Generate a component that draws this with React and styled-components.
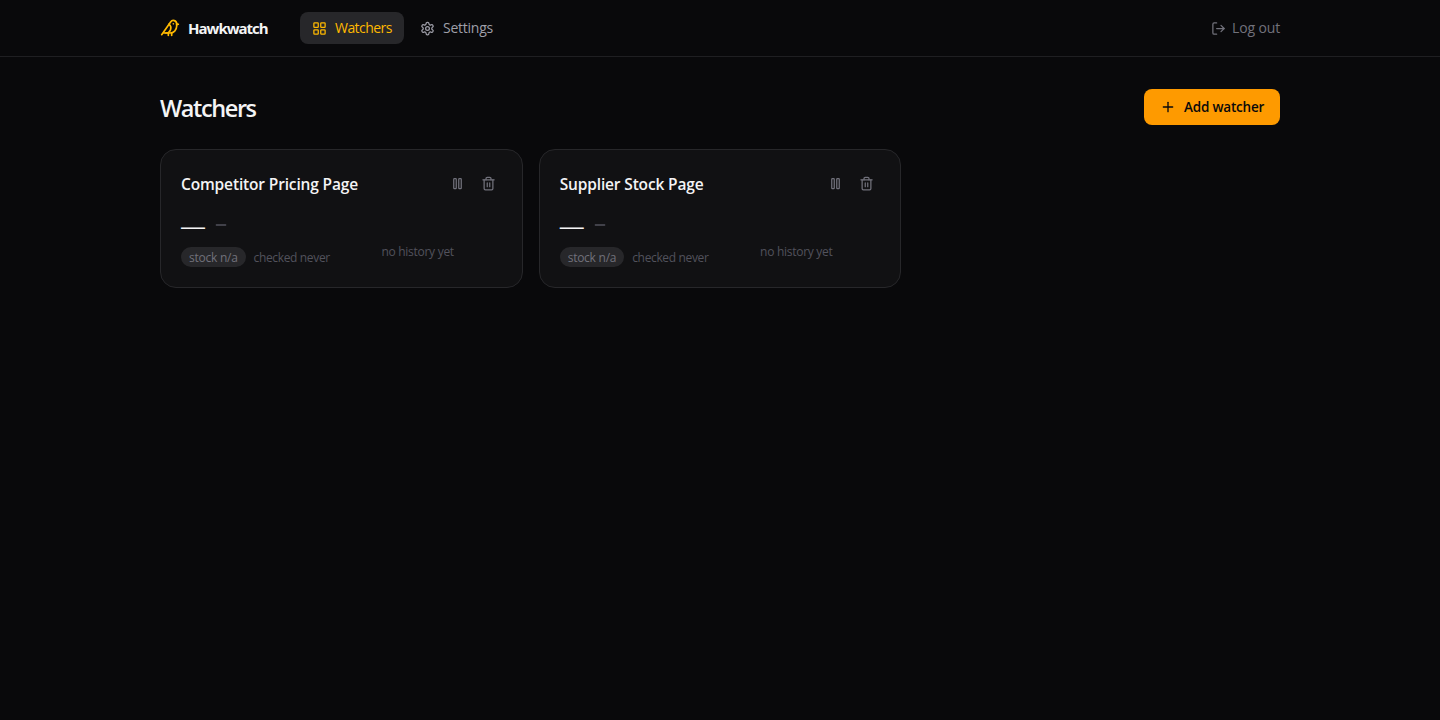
import React from "react";
import styled, { createGlobalStyle } from "styled-components";
import { Bird, LayoutGrid, LogOut, Minus, Plus } from "lucide-react";

const GlobalStyle = createGlobalStyle`
  *, *::before, *::after {
    box-sizing: border-box;
  }
  body {
    margin: 0;
    background-color: #09090b;
    color: #f4f4f5;
    font-family: "Open Sans", "Noto Sans", sans-serif;
    font-size: 14px;
    line-height: 20px;
  }
  svg {
    display: block;
    flex-shrink: 0;
  }
  h1, h2 {
    margin: 0;
  }
  button {
    font: inherit;
    border: 0;
    cursor: pointer;
  }
`;

const Page = styled.div`
  min-height: 100vh;
`;

const Header = styled.header`
  border-bottom: 1px solid #1f1f22;
`;

const HeaderInner = styled.div`
  width: 1120px;
  height: 56px;
  margin: 0 auto;
  display: flex;
  align-items: center;
`;

const Brand = styled.div`
  width: 108px;
  margin-right: 32px;
  display: flex;
  align-items: center;
  gap: 8px;
  font-size: 15px;
  font-weight: 700;
  letter-spacing: -1px;
  white-space: nowrap;

  svg {
    color: #ffb900;
  }
`;

const Nav = styled.nav`
  display: flex;
  gap: 4px;
`;

const NavLink = styled.a`
  width: ${(props) => props.$width};
  height: 32px;
  padding: 0 12px;
  display: flex;
  align-items: center;
  gap: 8px;
  border-radius: 8px;
  letter-spacing: ${(props) => props.$tracking};
  white-space: nowrap;
  color: ${(props) => (props.$active ? "#ffb900" : "#9f9fa9")};
  background-color: ${(props) => (props.$active ? "#27272a" : "transparent")};
`;

const LogoutButton = styled.button`
  margin-left: auto;
  padding: 0;
  display: flex;
  align-items: center;
  gap: 6px;
  background: none;
  color: #71717b;
  letter-spacing: -0.15px;
`;

const Main = styled.main`
  width: 1120px;
  margin: 0 auto;
  padding-top: 32px;
`;

const TitleRow = styled.div`
  height: 36px;
  margin-bottom: 24px;
  display: flex;
  align-items: center;
  justify-content: space-between;
`;

const Title = styled.h1`
  padding-top: 2px;
  font-size: 23.5px;
  line-height: 32px;
  font-weight: 600;
  letter-spacing: -1.4px;
`;

const AddButton = styled.button`
  width: 136px;
  height: 36px;
  padding: 0 16px;
  display: flex;
  align-items: center;
  gap: 8px;
  border-radius: 8px;
  background-color: #fe9a00;
  color: #09090b;
  font-size: 13.5px;
  font-weight: 600;
  letter-spacing: -0.2px;
  white-space: nowrap;
`;

const Grid = styled.div`
  display: grid;
  grid-template-columns: repeat(3, 1fr);
  gap: 16px;
`;

const Card = styled.article`
  height: 139px;
  padding: 20px;
  border: 1px solid #27272a;
  border-radius: 16px;
  background-color: #111113;
`;

const CardHeader = styled.div`
  height: 27px;
  margin-bottom: 12px;
  display: flex;
  align-items: center;
  justify-content: space-between;
`;

const CardTitle = styled.h2`
  font-size: 15.5px;
  line-height: 24px;
  font-weight: 600;
  letter-spacing: -0.15px;
  white-space: nowrap;
`;

const Actions = styled.div`
  display: flex;
  gap: 4px;
`;

const IconButton = styled.button`
  padding: 6px;
  background: none;
  color: #71717b;
`;

const CardBody = styled.div`
  height: 58px;
  display: flex;
  justify-content: space-between;
`;

const PriceRow = styled.div`
  height: 32px;
  margin-bottom: 6px;
  display: flex;
  align-items: center;
  gap: 8px;

  svg {
    color: #52525c;
  }
`;

const Price = styled.span`
  padding-top: 2px;
  font-family: "Liberation Sans", sans-serif;
  font-size: 24px;
  line-height: 32px;
  font-weight: 400;
`;

const MetaRow = styled.div`
  height: 20px;
  display: flex;
  gap: 8px;
  font-size: 12px;
  line-height: 22px;
  letter-spacing: -0.25px;
  white-space: nowrap;
`;

const StockBadge = styled.span`
  height: 20px;
  padding: 0 8px;
  border-radius: 10px;
  background-color: #27272a;
  color: #71717b;
`;

const Checked = styled.span`
  letter-spacing: -0.35px;
  color: #52525c;
`;

const History = styled.div`
  width: 168px;
  height: 48px;
  margin-top: 19px;
  line-height: 48px;
  text-align: center;
  color: #52525c;
  font-size: 12px;
  letter-spacing: -0.28px;
`;

const Icon = ({ children }) => (
  <svg
    width="15"
    height="15"
    viewBox="0 0 24 24"
    fill="none"
    stroke="currentColor"
    strokeWidth="2"
    strokeLinecap="round"
    strokeLinejoin="round"
  >
    {children}
  </svg>
);

const PauseIcon = () => (
  <Icon>
    <rect x="14" y="4" width="4" height="16" rx="1" />
    <rect x="6" y="4" width="4" height="16" rx="1" />
  </Icon>
);

const TrashIcon = () => (
  <Icon>
    <path d="M3 6h18" />
    <path d="M19 6v14c0 1-1 2-2 2H7c-1 0-2-1-2-2V6" />
    <path d="M8 6V4c0-1 1-2 2-2h4c1 0 2 1 2 2v2" />
    <path d="M10 11v6" />
    <path d="M14 11v6" />
  </Icon>
);

const SettingsIcon = () => (
  <Icon>
    <path d="M12.22 2h-.44a2 2 0 0 0-2 2v.18a2 2 0 0 1-1 1.73l-.43.25a2 2 0 0 1-2 0l-.15-.08a2 2 0 0 0-2.73.73l-.22.38a2 2 0 0 0 .73 2.73l.15.1a2 2 0 0 1 1 1.72v.51a2 2 0 0 1-1 1.74l-.15.09a2 2 0 0 0-.73 2.73l.22.38a2 2 0 0 0 2.73.73l.15-.08a2 2 0 0 1 2 0l.43.25a2 2 0 0 1 1 1.73V20a2 2 0 0 0 2 2h.44a2 2 0 0 0 2-2v-.18a2 2 0 0 1 1-1.73l.43-.25a2 2 0 0 1 2 0l.15.08a2 2 0 0 0 2.73-.73l.22-.39a2 2 0 0 0-.73-2.73l-.15-.08a2 2 0 0 1-1-1.74v-.5a2 2 0 0 1 1-1.74l.15-.09a2 2 0 0 0 .73-2.73l-.22-.38a2 2 0 0 0-2.73-.73l-.15.08a2 2 0 0 1-2 0l-.43-.25a2 2 0 0 1-1-1.73V4a2 2 0 0 0-2-2z" />
    <circle cx="12" cy="12" r="3" />
  </Icon>
);

const watchers = ["Competitor Pricing Page", "Supplier Stock Page"];

const WatcherCard = ({ name }) => (
  <Card>
    <CardHeader>
      <CardTitle>{name}</CardTitle>
      <Actions>
        <IconButton aria-label="Pause">
          <PauseIcon />
        </IconButton>
        <IconButton aria-label="Delete">
          <TrashIcon />
        </IconButton>
      </Actions>
    </CardHeader>
    <CardBody>
      <div>
        <PriceRow>
          <Price>—</Price>
          <Minus size={16} />
        </PriceRow>
        <MetaRow>
          <StockBadge>stock n/a</StockBadge>
          <Checked>checked never</Checked>
        </MetaRow>
      </div>
      <History>no history yet</History>
    </CardBody>
  </Card>
);

const App = () => (
  <>
    <GlobalStyle />
    <Page>
      <Header>
        <HeaderInner>
          <Brand>
            <Bird size={20} />
            <span>Hawkwatch</span>
          </Brand>
          <Nav>
            <NavLink $active $width="104px" $tracking="-0.55px">
              <LayoutGrid size={15} />
              <span>Watchers</span>
            </NavLink>
            <NavLink $width="98px" $tracking="-0.25px">
              <SettingsIcon />
              <span>Settings</span>
            </NavLink>
          </Nav>
          <LogoutButton>
            <LogOut size={15} />
            <span>Log out</span>
          </LogoutButton>
        </HeaderInner>
      </Header>
      <Main>
        <TitleRow>
          <Title>Watchers</Title>
          <AddButton>
            <Plus size={16} />
            <span>Add watcher</span>
          </AddButton>
        </TitleRow>
        <Grid>
          {watchers.map((name) => (
            <WatcherCard key={name} name={name} />
          ))}
        </Grid>
      </Main>
    </Page>
  </>
);

export default App;
